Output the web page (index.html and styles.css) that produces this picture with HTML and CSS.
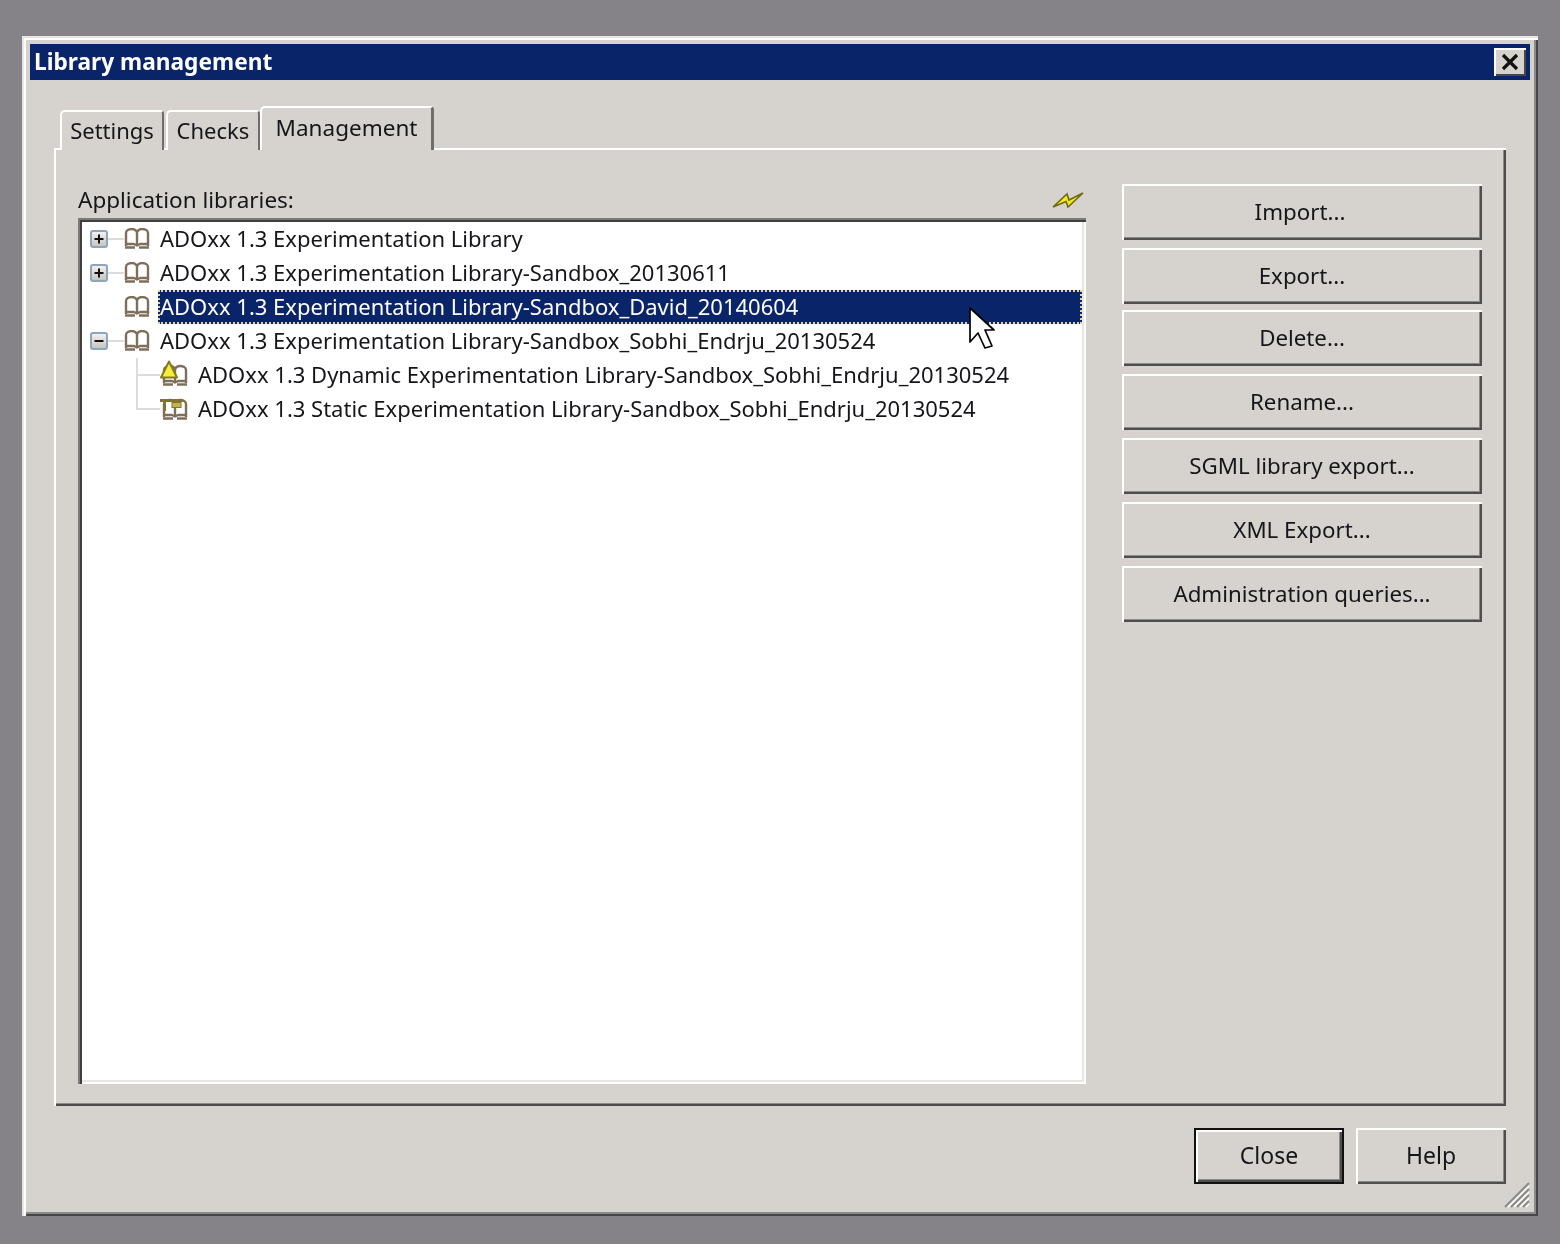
FILE: index.html
```html
<!DOCTYPE html>
<html lang="en">
<head>
<meta charset="utf-8">
<title>Library management</title>
<link rel="stylesheet" href="styles.css">
</head>
<body>
<svg class="defs" width="0" height="0" aria-hidden="true">
  <defs>
    <g id="book" fill="none" stroke="#7d6f5c" stroke-width="2.400" stroke-linejoin="round">
      <path d="M2 19V5C2 2.500 5 1 8 1C10 1 12 2 13 4C14 2 16 1 18 1C21 1 24 2.500 24 5V19Z" fill="#fff" stroke="none"/>
      <path d="M2 18V5C2 2.500 5 1 8 1C10 1 12 2 13 4C14 2 16 1 18 1C21 1 24 2.500 24 5V18"/>
      <path d="M13 4V16"/>
      <path d="M3 16H10L13 17.500L16 16H23"/>
      <path d="M1 19.500H11M15 19.500H25"/>
    </g>
    <linearGradient id="exp" x1="0" y1="0" x2="0" y2="1">
      <stop offset="0" stop-color="#f4f4f2"/>
      <stop offset="1" stop-color="#c4c2ba"/>
    </linearGradient>
  </defs>
</svg>
<div class="window">
  <header class="titlebar">
    <span class="title">Library management</span>
    <button class="close-x" aria-label="Close">
      <svg width="22" height="18" viewBox="0 0 22 18"><path d="M4 2L18 16M18 2L4 16" stroke="#111" stroke-width="3.2" fill="none"/></svg>
    </button>
  </header>
  <div class="tabs">
    <div class="tab tab-settings">Settings</div>
    <div class="tab tab-checks">Checks</div>
    <div class="tab tab-active">Management</div>
  </div>
  <div class="pane">
    <div class="left">
      <div class="label-row">
        <span>Application libraries:</span>
        <svg class="bolt" width="32" height="16" viewBox="0 0 32 16"><path d="M1 15L15 2L17 8L31 1L16 15L14 9.500Z" fill="#f2ea1c" stroke="#6e6a12" stroke-width="1.600" stroke-linejoin="miter"/></svg>
      </div>
      <div class="list">
        <div class="row">
          <svg class="expander" width="18" height="18" viewBox="0 0 18 18"><rect x="1" y="1" width="16" height="16" rx="2" fill="url(#exp)" stroke="#8fa5bb" stroke-width="2"/><path d="M4.500 9H13.500M9 4.500V13.500" stroke="#111" stroke-width="2"/></svg>
          <span class="stub"></span>
          <svg class="book" width="26" height="21" viewBox="0 0 26 21"><use href="#book"/></svg>
          <span class="label">ADOxx 1.3 Experimentation Library</span>
        </div>
        <div class="row">
          <svg class="expander" width="18" height="18" viewBox="0 0 18 18"><rect x="1" y="1" width="16" height="16" rx="2" fill="url(#exp)" stroke="#8fa5bb" stroke-width="2"/><path d="M4.500 9H13.500M9 4.500V13.500" stroke="#111" stroke-width="2"/></svg>
          <span class="stub"></span>
          <svg class="book" width="26" height="21" viewBox="0 0 26 21"><use href="#book"/></svg>
          <span class="label">ADOxx 1.3 Experimentation Library-Sandbox_20130611</span>
        </div>
        <div class="row">
          <span class="expander-gap"></span>
          <svg class="book" width="26" height="21" viewBox="0 0 26 21"><use href="#book"/></svg>
          <span class="label selected">ADOxx 1.3 Experimentation Library-Sandbox_David_20140604</span>
        </div>
        <div class="row">
          <svg class="expander" width="18" height="18" viewBox="0 0 18 18"><rect x="1" y="1" width="16" height="16" rx="2" fill="url(#exp)" stroke="#8fa5bb" stroke-width="2"/><path d="M4.500 9H13.500" stroke="#111" stroke-width="2"/></svg>
          <span class="stub"></span>
          <svg class="book" width="26" height="21" viewBox="0 0 26 21"><use href="#book"/></svg>
          <span class="label">ADOxx 1.3 Experimentation Library-Sandbox_Sobhi_Endrju_20130524</span>
        </div>
        <div class="row child">
          <svg class="branch" width="24" height="34" viewBox="0 0 24 34"><path d="M1 0V34M1 17H24" stroke="#dcdcdc" stroke-width="2" fill="none"/></svg>
          <svg class="child-icon" width="28" height="26" viewBox="0 0 28 26">
            <g transform="translate(2 5)"><use href="#book"/></g>
            <path d="M9 1.500L17 17.500H1Z" fill="#f3ee3a" stroke="#87781e" stroke-width="2" stroke-linejoin="round"/>
          </svg>
          <span class="label">ADOxx 1.3 Dynamic Experimentation Library-Sandbox_Sobhi_Endrju_20130524</span>
        </div>
        <div class="row child">
          <svg class="branch" width="24" height="34" viewBox="0 0 24 34"><path d="M1 0V17H24" stroke="#dcdcdc" stroke-width="2" fill="none"/></svg>
          <svg class="child-icon" width="28" height="26" viewBox="0 0 28 26">
            <g transform="translate(2 5)"><use href="#book"/></g>
            <path d="M0 6.500H23" stroke="#7f7330" stroke-width="3"/>
            <rect x="12" y="8.500" width="9" height="5" fill="#c4b24a" stroke="#7f7330"/>
            <path d="M5 8V17" stroke="#7f7330" stroke-width="2"/>
          </svg>
          <span class="label">ADOxx 1.3 Static Experimentation Library-Sandbox_Sobhi_Endrju_20130524</span>
        </div>
        <svg class="cursor" width="26" height="44" viewBox="0 0 26 44"><path d="M1 1V35L9 26L16 41L23 39L16 23H25Z" fill="#fff" stroke="#000" stroke-width="1.700" stroke-linejoin="round"/></svg>
      </div>
    </div>
    <div class="actions">
      <button class="btn btn-import">Import...</button>
      <button class="btn">Export...</button>
      <button class="btn btn-tight">Delete...</button>
      <button class="btn">Rename...</button>
      <button class="btn">SGML library export...</button>
      <button class="btn">XML Export...</button>
      <button class="btn">Administration queries...</button>
    </div>
  </div>
  <footer class="footer">
    <button class="btn btn-foot btn-default">Close</button>
    <button class="btn btn-foot">Help</button>
  </footer>
  <svg class="grip" width="28" height="28" viewBox="0 0 28 28"><path d="M27 3L3 27M27 9L9 27M27 15L15 27M27 21L21 27" stroke="#8b8b8b" stroke-width="2" fill="none"/><path d="M27 6L6 27M27 12L12 27M27 18L18 27M27 24L24 27" stroke="#fff" stroke-width="1.500" fill="none"/></svg>
</div>
</body>
</html>
```
FILE: styles.css
```css
* { box-sizing: border-box; }
html, body { margin: 0; height: 100%; }
body {
  background: #858387;
  padding: 36px 0 0 22px;
  font-family: "Noto Sans", "Open Sans", sans-serif;
  font-size: 23px;
  color: #15151a;
  overflow: hidden;
}
.defs { position: absolute; }
.window {
  position: relative;
  width: 1516px;
  height: 1180px;
  padding: 8px;
  background: #d6d3ce;
  box-shadow: inset 2px 2px 0 #e8e6e2, inset 4px 4px 0 #fff, inset -2px -2px 0 #47464a, inset -4px -4px 0 #8d8b88;
  filter: blur(0.45px);
}
.titlebar {
  height: 36px;
  background: #0a246a;
  display: flex;
  align-items: center;
  justify-content: space-between;
  padding: 0 4px;
}
.title {
  color: #fff;
  font-weight: 700;
  font-size: 22.700px;
  margin-bottom: 2px;
}
.close-x {
  width: 32px;
  height: 28px;
  padding: 0;
  border: 0;
  background: #d6d3ce;
  display: flex;
  align-items: center;
  justify-content: center;
  box-shadow: inset 2px 2px 0 #fff, inset -2px -2px 0 #47464a;
}
.tabs {
  display: flex;
  align-items: flex-end;
  height: 44px;
  margin: 26px 24px -2px;
  padding-left: 6px;
}
.tab {
  position: relative;
  height: 40px;
  padding-top: 3px;
  font-size: 22px;
  text-align: center;
  background: #d6d3ce;
  border-top: 2px solid #fff;
  border-left: 2px solid #fff;
  border-right: 2px solid #6e6d6c;
  border-top-left-radius: 5px;
  border-top-right-radius: 4px;
}
.tab-settings { width: 104px; margin-right: 2px; }
.tab-checks { width: 94px; }
.tab-active {
  z-index: 1;
  width: 174px;
  height: 44px;
  padding-top: 4px;
  font-size: 22.500px;
  border-right-width: 3px;
}
.pane {
  display: flex;
  gap: 36px;
  height: 958px;
  margin: 0 24px;
  padding: 36px 24px 22px;
  background: #d6d3ce;
  box-shadow: inset 2px 2px 0 #fff, inset -2px -2px 0 #4d4c4d, inset -3px -3px 0 #8d8b88;
}
.left {
  width: 1008px;
  display: flex;
  flex-direction: column;
}
.label-row {
  height: 34px;
  display: flex;
  align-items: flex-start;
  justify-content: space-between;
  font-size: 22.500px;
  line-height: 31px;
  padding-right: 2px;
}
.bolt { margin-top: 8px; }
.list {
  position: relative;
  flex: 1;
  background: #fff;
  padding: 4px;
  font-size: 22px;
  box-shadow: inset 2px 2px 0 #7b7a7a, inset 4px 4px 0 #3f3f3f, inset -2px -2px 0 #fff, inset -4px -4px 0 #e8e6e2;
}
.row {
  height: 34px;
  display: flex;
  align-items: center;
  padding-left: 8px;
}
.child { padding-left: 54px; }
.expander { flex: none; }
.stub {
  flex: none;
  width: 16px;
  height: 2px;
  background: #dcdcdc;
}
.expander-gap { flex: none; width: 34px; }
.book { flex: none; margin-bottom: 2px; }
.branch { flex: none; }
.child-icon { flex: none; margin-bottom: 4px; }
.label {
  margin-left: 8px;
  padding: 0 2px 2px;
  white-space: nowrap;
  line-height: 32px;
}
.selected {
  flex: 1;
  background: #0a246a;
  color: #fff;
  outline: 2px dotted #e8d49a;
  outline-offset: -2px;
}
.cursor {
  position: absolute;
  left: 891px;
  top: 89px;
}
.actions {
  width: 360px;
  display: flex;
  flex-direction: column;
  gap: 8px;
  font-size: 22.300px;
}
.btn {
  height: 56px;
  padding: 0 0 2px;
  border: 0;
  background: #d6d3ce;
  font: inherit;
  color: inherit;
  box-shadow: inset 2px 2px 0 #fff, inset -2px -2px 0 #4f4e4e, inset -3px -3px 0 #8d8b88;
}
.btn-tight { margin-top: -2px; }
.btn-import { padding-right: 4px; }
.footer {
  display: flex;
  justify-content: flex-end;
  gap: 12px;
  margin: 22px 24px 0;
}
.btn-foot { width: 150px; }
.btn-default {
  box-shadow: inset 0 0 0 2px #111, inset 4px 4px 0 #fff, inset -4px -4px 0 #4f4e4e, inset -5px -5px 0 #8d8b88;
}
.grip {
  position: absolute;
  right: 8px;
  bottom: 8px;
}
```
